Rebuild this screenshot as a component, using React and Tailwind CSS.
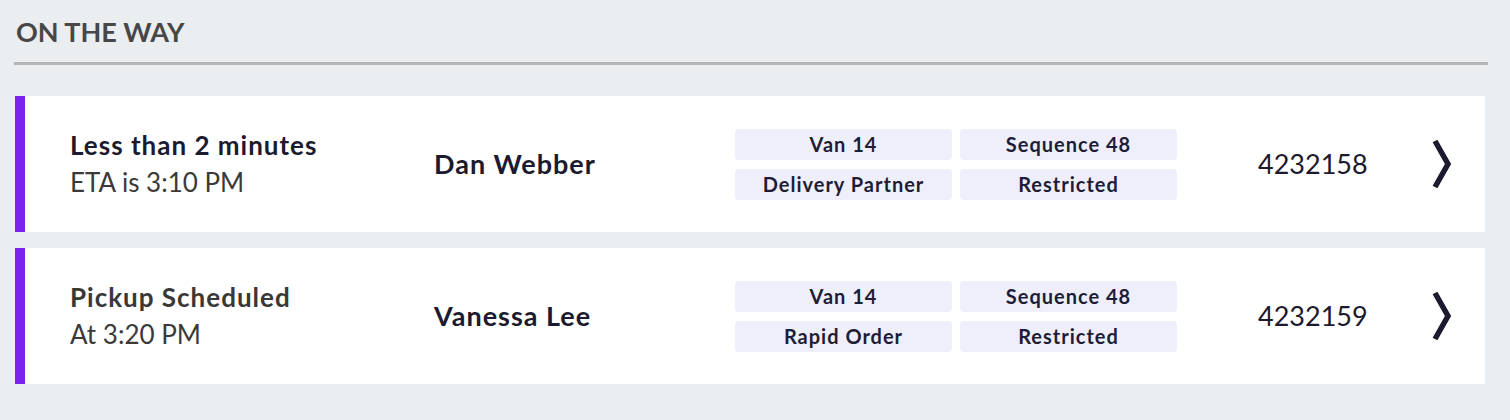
import React from 'react';

const deliveries = [
  {
    title: 'Less than 2 minutes',
    titleColor: 'text-[#1b1a2e]',
    subtitle: 'ETA is 3:10 PM',
    driver: 'Dan Webber',
    tags: ['Van 14', 'Sequence 48', 'Delivery Partner', 'Restricted'],
    order: '4232158',
  },
  {
    title: 'Pickup Scheduled',
    titleColor: 'text-[#383838]',
    subtitle: 'At 3:20 PM',
    driver: 'Vanessa Lee',
    tags: ['Van 14', 'Sequence 48', 'Rapid Order', 'Restricted'],
    order: '4232159',
  },
];

const Chevron = () => (
  <svg width="20" height="50" viewBox="0 0 20 50" fill="none" className="shrink-0">
    <polyline points="3,2 16,25 3,48" stroke="#1b1a2e" strokeWidth="5.5" strokeLinejoin="miter" />
  </svg>
);

const DeliveryCard = ({ item }) => (
  <div className="flex items-center h-[136px] bg-white border-l-[10px] border-[#7a22ee] pl-[45px]">
    {/* ETA */}
    <div className="w-[364px] shrink-0">
      <div className={`text-[26px] leading-[37px] font-bold tracking-[1px] ${item.titleColor}`}>{item.title}</div>
      <div className="text-[26px] leading-[37px] text-[#3a3a3a]">{item.subtitle}</div>
    </div>

    {/* Driver */}
    <div className="w-[301px] shrink-0 text-[27px] font-bold tracking-[1px] text-[#1b1a2e]">{item.driver}</div>

    {/* Tags */}
    <div className="grid grid-cols-[217px_217px] gap-x-2 gap-y-[9px] shrink-0">
      {item.tags.map((tag) => (
        <div
          key={tag}
          className="h-[31px] flex items-center justify-center rounded bg-[#efeffc] text-[20px] font-bold tracking-[1px] text-[#1f1d36]"
        >
          {tag}
        </div>
      ))}
    </div>

    {/* Order number */}
    <div className="ml-[81px] w-[174px] shrink-0 text-[27px] text-[#1b1a2e]">{item.order}</div>

    <Chevron />
  </div>
);

export default function App() {
  return (
    <div className="min-h-[420px] bg-[#ebeef1] pl-[14px] pr-[22px] pt-[14px] font-['Lato',sans-serif]">
      <h2 className="pl-[2px] text-[27px] leading-[36px] font-bold text-[#474747]">ON THE WAY</h2>
      <div className="mt-[12px] h-[3px] bg-[#b4b4b4]" />

      <div className="mt-[31px] ml-px mr-[3px] flex flex-col gap-4">
        {deliveries.map((item) => (
          <DeliveryCard key={item.order} item={item} />
        ))}
      </div>
    </div>
  );
}
